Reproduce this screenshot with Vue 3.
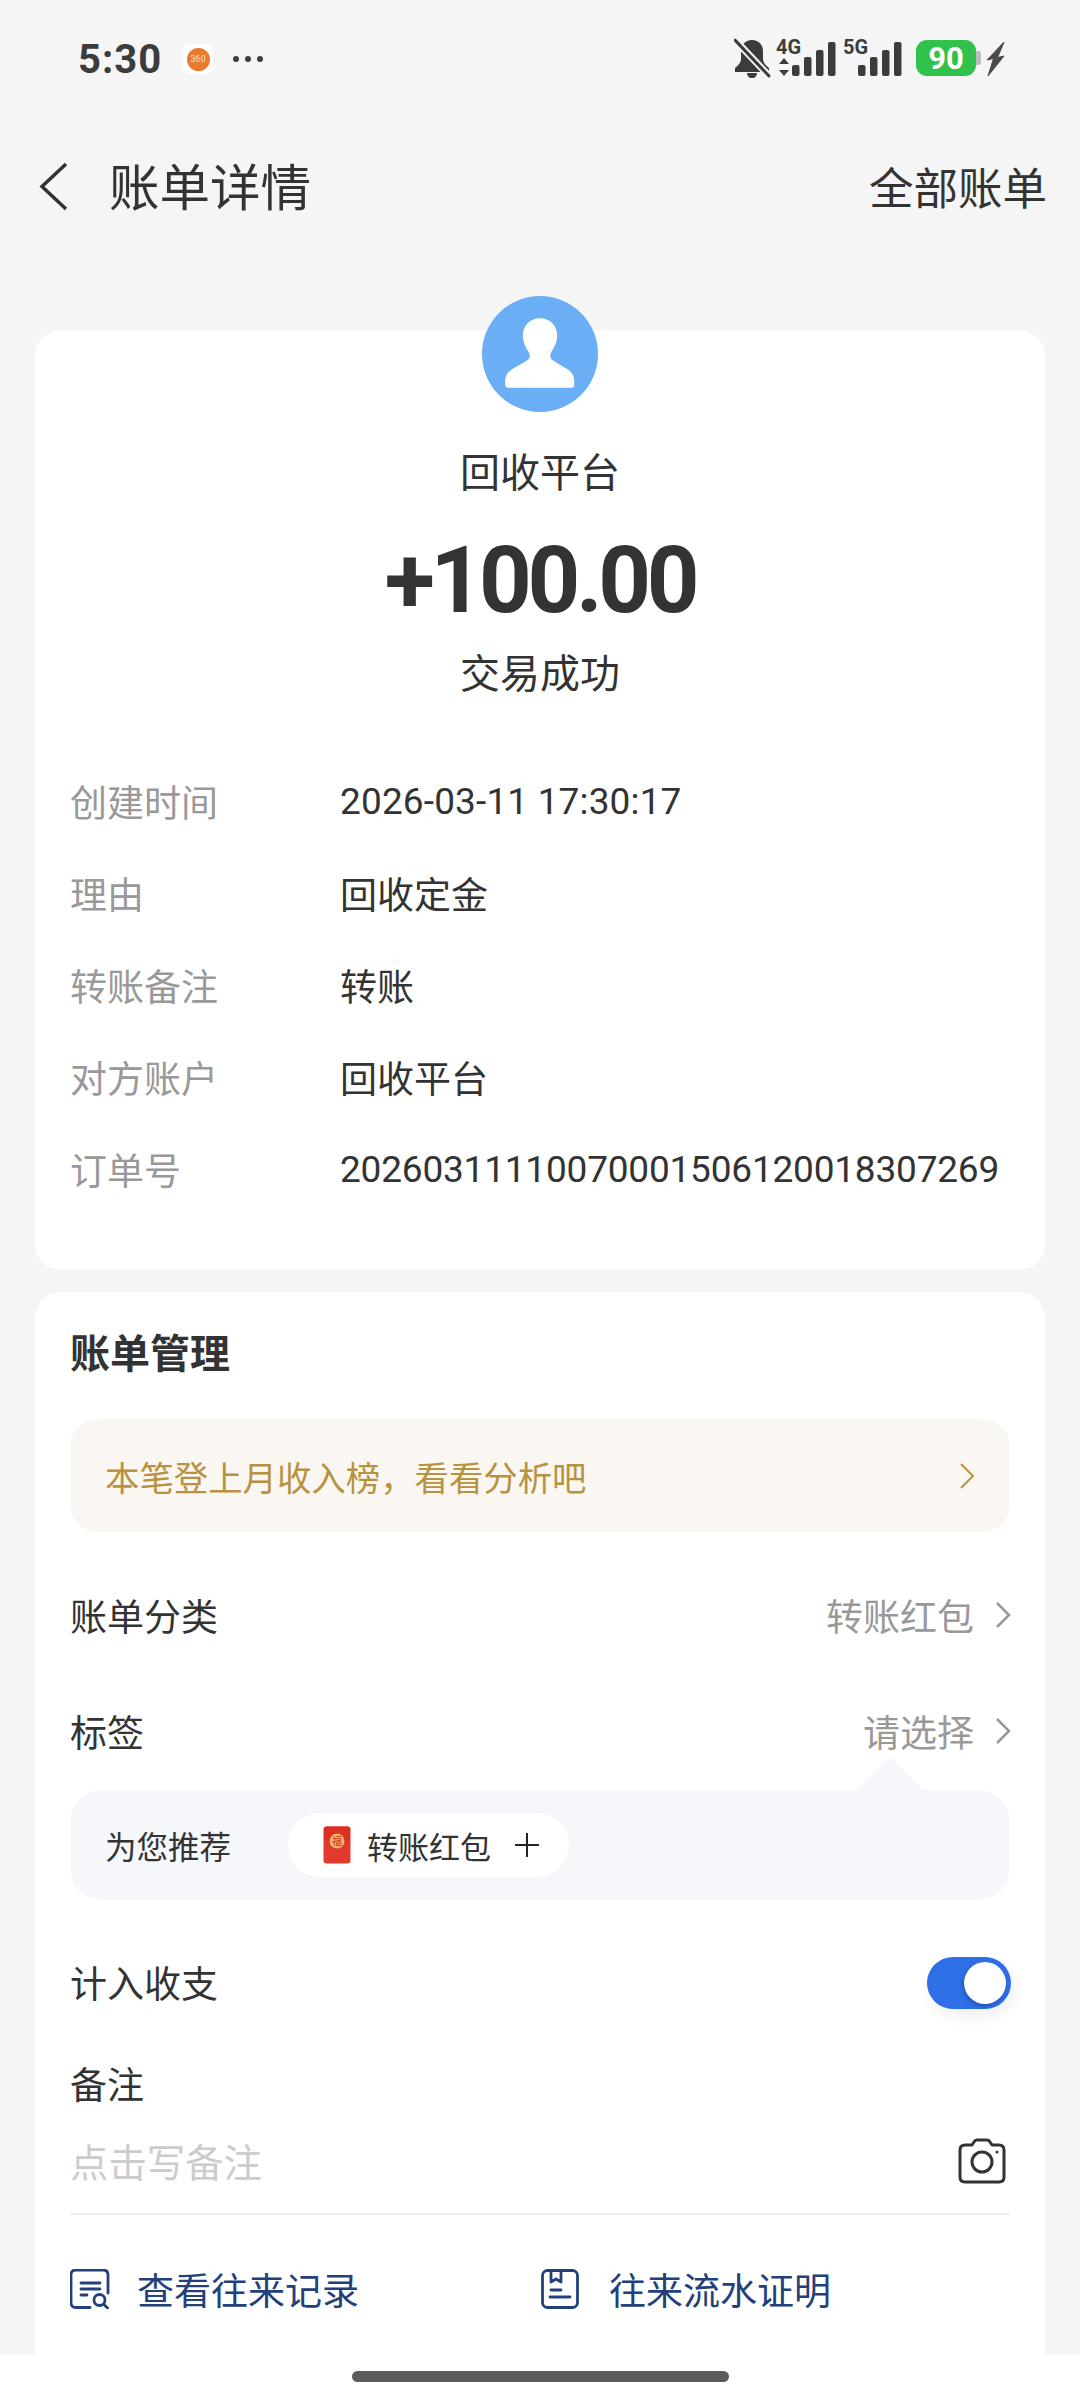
<script setup>
const details = [
  { label: '创建时间', value: '2026-03-11 17:30:17', cls: 'date' },
  { label: '理由', value: '回收定金' },
  { label: '转账备注', value: '转账' },
  { label: '对方账户', value: '回收平台' },
  { label: '订单号', value: '20260311110070001506120018307269', cls: 'order' }
]

const bars4g = [
  { x: 58, y: 27, h: 11 },
  { x: 70, y: 19, h: 19 },
  { x: 82, y: 12, h: 26 },
  { x: 94, y: 4, h: 34 }
]
const bars5g = bars4g.map(b => ({ ...b, x: b.x + 66 }))
</script>

<template>
  <div class="page">
    <!-- status bar -->
    <div class="status">
      <div class="status-left">
        <span class="time">5:30</span>
        <div class="app-icon"><span class="app-ball">360</span></div>
        <div class="dots"><i></i><i></i><i></i></div>
      </div>
      <svg class="status-right" width="272" height="58" viewBox="0 -8 272 58">
        <g fill="#3c3c3c">
          <path d="M18 2c7 0 11 5 11 11v8c0 3 2 6 6 9v4H1v-4c4-3 6-6 6-9v-8C7 7 11 2 18 2z" />
          <path d="M13 35h10c0 3-2 5-5 5s-5-2-5-5z" />
        </g>
        <path d="M2 3l33 35" stroke="#f5f5f5" stroke-width="7" />
        <path d="M1 2l34 36" stroke="#3c3c3c" stroke-width="3" stroke-linecap="round" />
        <text x="42" y="16" class="net">4G</text>
        <path d="M50 20l5 6H45zM50 38l-5-6h10z" fill="#3c3c3c" />
        <rect v-for="b in bars4g" :key="b.x" :x="b.x" :y="b.y" width="7.500" :height="b.h" rx="2" fill="#3c3c3c" />
        <text x="109" y="16" class="net">5G</text>
        <rect v-for="b in bars5g" :key="b.x" :x="b.x" :y="b.y" width="7.500" :height="b.h" rx="2" fill="#3c3c3c" />
        <path d="M242 13h2c2 0 3 1 3 3v8c0 2-1 3-3 3h-2z" fill="#bdbdbd" />
        <rect x="182" y="2" width="60" height="36" rx="11" fill="#30c24b" />
        <text x="212" y="31" class="batt">90</text>
        <path d="M270 4l-17 18 6.500-1.500L254 38l16-20-6.500 1.500L268 9z" fill="#4a4a4a" stroke="#4a4a4a" stroke-width="1" />
      </svg>
    </div>

    <!-- header -->
    <div class="header">
      <div class="header-left">
        <svg width="29" height="49" viewBox="0 0 29 49" fill="none">
          <path d="M27 2L3 24.500 27 47" stroke="#333" stroke-width="3.500" />
        </svg>
        <span class="title">账单详情</span>
      </div>
      <span class="all">全部账单</span>
    </div>

    <div class="main">
      <!-- trade card -->
      <section class="card trade">
        <svg class="avatar" width="116" height="116" viewBox="0 0 115 115">
          <circle cx="57.500" cy="57.500" r="57.500" fill="#6aaef6" />
          <path fill="#fff" d="M57.500 22C67 22 74.500 29 74.500 39C74.500 47 71 52 68.500 56C66.500 60 68 63 72 65L84 72C89 75 91.500 79 91.500 84L91.500 88Q91.500 91 88.500 91L26 91Q23 91 23 88L23 84C23 79 25.500 75 30.500 72L43 65C47 63 48.500 60 46.500 56C44 52 40.500 47 40.500 39C40.500 29 48 22 57.500 22Z" />
        </svg>
        <div class="name">回收平台</div>
        <div class="amount">+100.00</div>
        <div class="state">交易成功</div>
        <div class="details">
          <div v-for="row in details" :key="row.label" class="detail-row">
            <span class="detail-label">{{ row.label }}</span>
            <span class="detail-value" :class="row.cls">{{ row.value }}</span>
          </div>
        </div>
      </section>

      <!-- bill management -->
      <section class="card manage">
        <div class="manage-title">账单管理</div>
        <div class="banner">
          <span>本笔登上月收入榜，看看分析吧</span>
          <svg width="16" height="26" viewBox="0 0 16 26" fill="none">
            <path d="M2 1l12 12L2 25" stroke="#b8923f" stroke-width="2" />
          </svg>
        </div>

        <div class="row category">
          <span>账单分类</span>
          <div class="row-right">
            <span>转账红包</span>
            <svg width="17" height="28" viewBox="0 0 17 28" fill="none">
              <path d="M2 2l12 12L2 26" stroke="#999" stroke-width="2.500" />
            </svg>
          </div>
        </div>

        <div class="row tags">
          <span>标签</span>
          <div class="row-right">
            <span>请选择</span>
            <svg width="17" height="28" viewBox="0 0 17 28" fill="none">
              <path d="M2 2l12 12L2 26" stroke="#999" stroke-width="2.500" />
            </svg>
          </div>
        </div>

        <div class="suggest">
          <span class="suggest-arrow"></span>
          <span class="suggest-label">为您推荐</span>
          <div class="chip">
            <svg width="28" height="38" viewBox="0 0 28 38">
              <rect x="0.500" y="0.500" width="27" height="37" rx="3" fill="#e23b2d" />
              <path d="M1 3q0-2.500 2.500-2.500h21Q27 .5 27 3v11q-13 8-26 0z" fill="#d9301f" />
              <circle cx="14" cy="15" r="7.500" fill="#f6b36a" />
              <text x="14" y="19" class="fu">福</text>
            </svg>
            <span class="chip-text">转账红包</span>
            <svg width="24" height="24" viewBox="0 0 24 24">
              <path d="M0 12h24M12 0v24" stroke="#222" stroke-width="2" />
            </svg>
          </div>
        </div>

        <div class="row income">
          <span>计入收支</span>
          <div class="toggle"><span class="knob"></span></div>
        </div>

        <div class="note-label">备注</div>
        <div class="note-input">
          <span class="placeholder">点击写备注</span>
          <svg width="48" height="46" viewBox="0 0 48 46" fill="none" stroke="#333" stroke-width="3">
            <path d="M14 7l2-3q1-2 3-2h10q2 0 3 2l2 3h7q5 0 5 5v27q0 5-5 5H7q-5 0-5-5V12q0-5 5-5z" stroke-linejoin="round" />
            <circle cx="24" cy="24" r="10" />
            <circle cx="39" cy="14" r="1.500" fill="#333" stroke="none" />
          </svg>
        </div>

        <div class="links">
          <div class="link">
            <svg width="40" height="40" viewBox="0 0 40 40" fill="none" stroke="#23407a" stroke-width="2.800" stroke-linecap="round">
              <path d="M20 38.500H6q-5 0-5-5V6q0-5 5-5h27q5 0 5 5v18" />
              <path d="M11 14h19M11 20h19M11 26h6" />
              <circle cx="29.500" cy="31" r="5.500" />
              <path d="M34 35.500l3.500 3.500" />
            </svg>
            <span>查看往来记录</span>
          </div>
          <div class="link">
            <svg class="proof-icon" width="38" height="40" viewBox="0 0 38 40" fill="none" stroke="#23407a" stroke-width="2.800" stroke-linecap="round" stroke-linejoin="round">
              <rect x="1.500" y="1.500" width="35" height="37" rx="5" />
              <path d="M10 2v11l5-3 5 3V2" />
              <path d="M10 21h10M9 28h20" />
            </svg>
            <span>往来流水证明</span>
          </div>
        </div>
      </section>
    </div>

    <div class="home-bar"><span class="home-pill"></span></div>
  </div>
</template>

<style scoped>
.page {
  width: 1080px;
  height: 2400px;
  background: #f5f5f5;
  display: flex;
  flex-direction: column;
  overflow: hidden;
  font-family: Roboto, "Noto Sans CJK SC", sans-serif;
  color: #333;
}

.status {
  height: 118px;
  flex: none;
  display: flex;
  align-items: center;
  justify-content: space-between;
  padding: 0 74px 0 78px;
}
.status-left {
  display: flex;
  align-items: center;
}
.time {
  font-size: 40px;
  font-weight: 700;
  letter-spacing: 1px;
  color: #3c3c3c;
}
.app-icon {
  width: 30px;
  height: 30px;
  margin-left: 21px;
  background: #fff;
  border-radius: 7px;
  display: flex;
  align-items: center;
  justify-content: center;
}
.app-ball {
  width: 23px;
  height: 23px;
  border-radius: 50%;
  background: #ea7a2e;
  color: #fde3c8;
  font-size: 9px;
  line-height: 23px;
  text-align: center;
}
.dots {
  display: flex;
  gap: 6px;
  margin-left: 20px;
}
.dots i {
  width: 6px;
  height: 6px;
  border-radius: 50%;
  background: #3c3c3c;
}
.net {
  font-size: 20px;
  font-weight: 700;
  fill: #3c3c3c;
}
.batt {
  font-size: 31px;
  font-weight: 700;
  fill: #fff;
  text-anchor: middle;
}

.header {
  height: 136px;
  flex: none;
  display: flex;
  align-items: center;
  justify-content: space-between;
  padding: 0 33px 0 39px;
}
.header-left {
  display: flex;
  align-items: center;
  gap: 41px;
}
.title {
  font-size: 50.5px;
  margin-bottom: 4px;
}
.all {
  font-size: 44.5px;
  margin-bottom: 2px;
}

.main {
  flex: 1;
  min-height: 0;
  padding: 76px 35px 0;
  overflow: hidden;
}
.card {
  background: #fff;
  border-radius: 26px;
  display: flow-root;
}
.trade {
  height: 940px;
  padding: 0 35px;
  text-align: center;
}
.avatar {
  display: block;
  margin: -34px auto -1px;
}
.name,
.state {
  font-size: 40px;
  line-height: 60px;
}
.name {
  margin-top: 33px;
}
.amount {
  margin-top: 22px;
  font-size: 92px;
  line-height: 110px;
  font-weight: 700;
  letter-spacing: -4.3px;
}
.state {
  margin-top: 9px;
}
.details {
  margin-top: 50px;
}
.detail-row {
  height: 92px;
  display: flex;
  align-items: center;
  font-size: 37px;
  text-align: left;
}
.detail-label {
  width: 270px;
  color: #999;
}
.detail-value {
  color: #333;
}
.date {
  letter-spacing: 0.15px;
}
.order {
  letter-spacing: -0.2px;
}

.manage {
  margin-top: 22px;
  height: 1062px;
  border-radius: 26px 26px 0 0;
  padding: 33px 35px 0;
}
.manage-title {
  font-size: 40px;
  line-height: 60px;
  font-weight: 700;
}
.banner {
  margin-top: 34px;
  height: 113px;
  padding: 0 35px;
  background: #faf7f3;
  border-radius: 28px;
  display: flex;
  align-items: center;
  justify-content: space-between;
  font-size: 34.4px;
  color: #b8923f;
}
.row {
  height: 80px;
  display: flex;
  align-items: center;
  justify-content: space-between;
  font-size: 37px;
}
.row-right {
  display: flex;
  align-items: center;
  gap: 21px;
  margin-right: -2px;
  color: #999;
}
.category {
  margin-top: 43px;
}
.tags {
  margin-top: 36px;
}
.suggest {
  position: relative;
  margin-top: 19px;
  height: 110px;
  background: #f5f7fb;
  border-radius: 32px;
  padding: 0 35px;
  display: flex;
  align-items: center;
  font-size: 31.5px;
}
.suggest-arrow {
  position: absolute;
  top: -33px;
  right: 87px;
  width: 66px;
  height: 33px;
  background: #f5f7fb;
  clip-path: polygon(50% 0, 100% 100%, 0 100%);
}
.suggest-label {
  width: 183px;
}
.chip {
  width: 281px;
  height: 64px;
  padding-left: 35px;
  box-sizing: border-box;
  background: #fff;
  border-radius: 32px;
  display: flex;
  align-items: center;
}
.chip-text {
  margin: 0 24px 0 16px;
  font-size: 31px;
}
.fu {
  font-size: 10px;
  fill: #c9301f;
  text-anchor: middle;
}
.income {
  margin-top: 42px;
}
.toggle {
  width: 84px;
  height: 52px;
  border-radius: 26px;
  background: #2e6fe8;
  box-shadow: 4px 8px 14px rgba(0, 0, 0, 0.06);
  position: relative;
  margin: 2px -1px 0 0;
}
.knob {
  position: absolute;
  top: 5px;
  right: 5px;
  width: 42px;
  height: 42px;
  border-radius: 50%;
  background: #fff;
  box-shadow: -1px 2px 4px rgba(0, 30, 90, 0.35);
}
.note-label {
  margin-top: 35px;
  font-size: 37px;
  line-height: 60px;
}
.note-input {
  margin-top: 14px;
  height: 60px;
  display: flex;
  align-items: center;
  justify-content: space-between;
  padding-right: 4px;
}
.placeholder {
  font-size: 38.4px;
  color: #ccc;
  margin-bottom: 2px;
}
.links {
  margin-top: 22px;
  padding-top: 44px;
  border-top: 2px solid #eee;
  display: grid;
  grid-template-columns: 471px 1fr;
}
.link {
  height: 60px;
  display: flex;
  align-items: center;
  gap: 27px;
  font-size: 37px;
  color: #23407a;
}
.proof-icon {
  margin-right: 3px;
}

.home-bar {
  height: 46px;
  flex: none;
  background: #fff;
  display: flex;
  justify-content: center;
  padding-top: 17px;
  box-sizing: border-box;
}
.home-pill {
  width: 377px;
  height: 11px;
  border-radius: 6px;
  background: #5c5c5c;
}
</style>
